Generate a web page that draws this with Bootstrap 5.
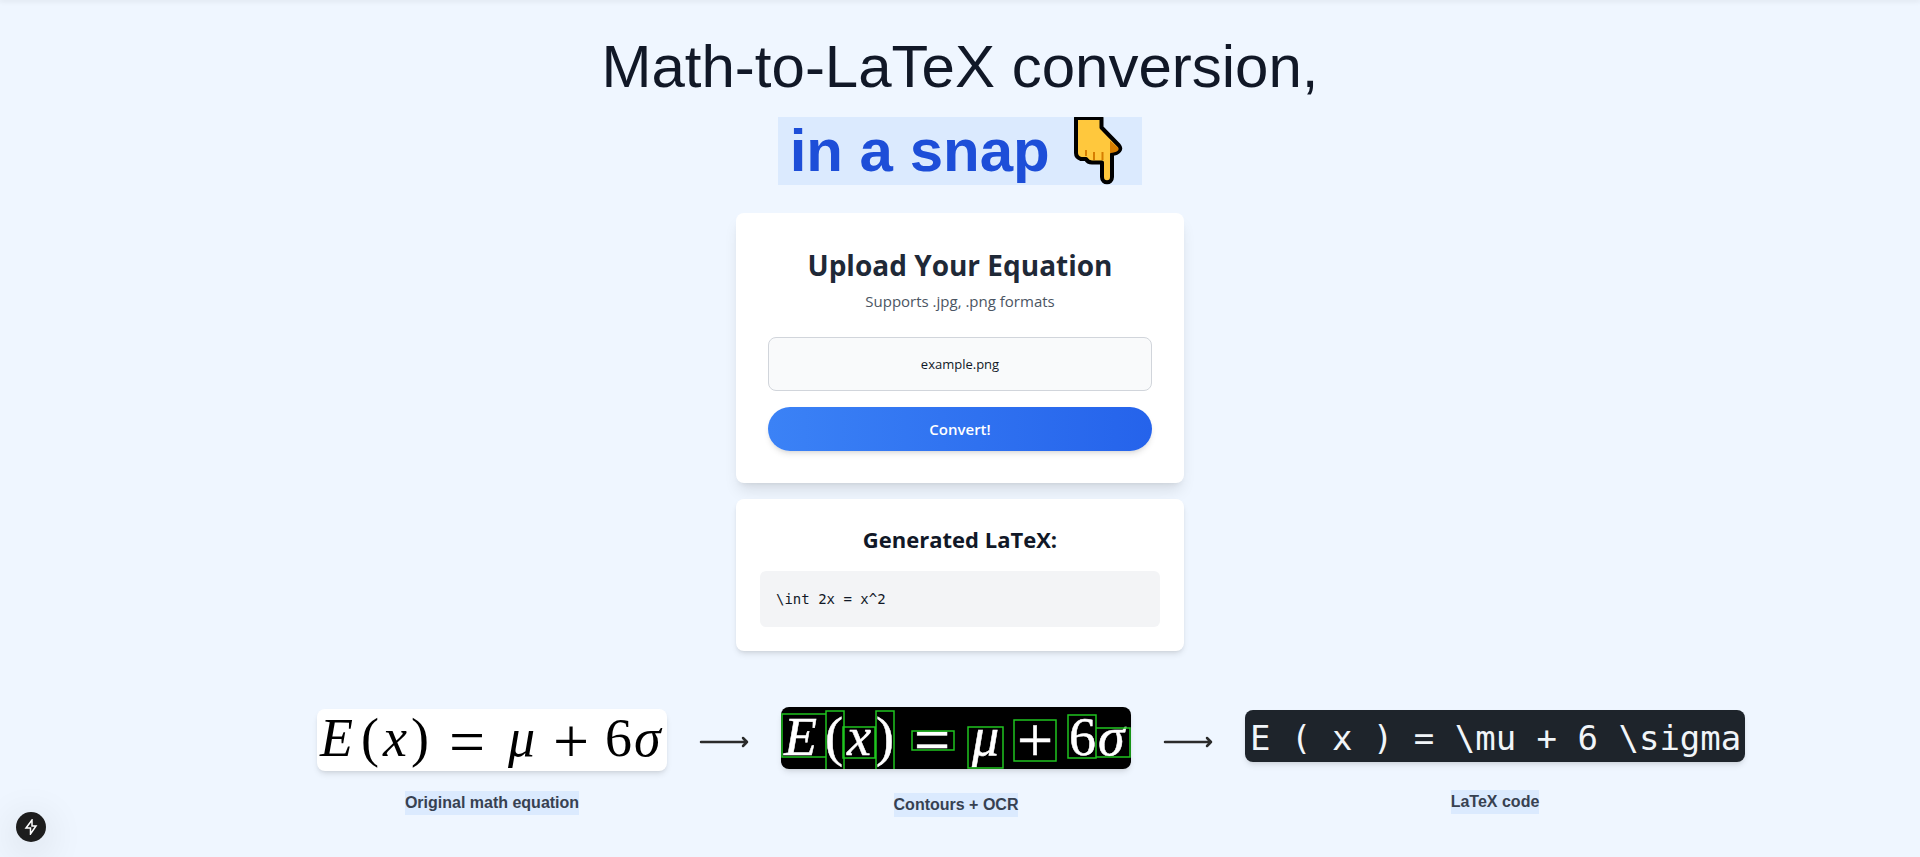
<!DOCTYPE html>
<html lang="en">
<head>
<meta charset="utf-8">
<meta name="viewport" content="width=device-width, initial-scale=1">
<title>Math-to-LaTeX conversion</title>
<link href="https://cdn.jsdelivr.net/npm/bootstrap@5.3.0/dist/css/bootstrap.min.css" rel="stylesheet">
<style>
  body { background: #eff6ff; color: #111827; font-family: "Liberation Sans", Arial, sans-serif; }
  .page-top { height: 0; box-shadow: 0 0 5px 1px rgba(0, 0, 0, .12); }
  .hero { font-size: 60px; line-height: 84px; padding-top: 25px; }
  .hero-mark { background: #dbeafe; color: #1d4ed8; padding: 0 12px; line-height: 68px; }
  .hand { width: 64px; height: 68px; }
  .tool-stack { max-width: 448px; margin-top: 20px; font-family: "Open Sans", "Noto Sans", sans-serif; }
  .panel { background: #fff; border-radius: 8px; }
  .panel-upload { padding: 32px; box-shadow: 0 10px 15px -3px rgba(0,0,0,.1), 0 4px 6px -4px rgba(0,0,0,.1); }
  .panel-result { padding: 24px; }
  .panel-result, .shot { box-shadow: 0 4px 6px -1px rgba(0,0,0,.1), 0 2px 4px -2px rgba(0,0,0,.1); }
  .upload-title { font-size: 28px; line-height: 40px; color: #1f2937; }
  .upload-hint { font-size: 15px; line-height: 24px; color: #4b5563; }
  .file-box { height: 54px; font-size: 13px; color: #111827; background: #f9fafb; border: 1px solid #d1d5db; border-radius: 8px; }
  .btn-convert { height: 44px; font-size: 15px; color: #fff; background: linear-gradient(90deg, #3b82f6, #2563eb); box-shadow: 0 4px 6px -1px rgba(0,0,0,.1), 0 2px 4px -2px rgba(0,0,0,.1); }
  .btn-convert:hover { color: #fff; }
  .result-title { font-size: 22px; line-height: 32px; }
  .result-code { font: 14px/24px "DejaVu Sans Mono", monospace; background: #f3f4f6; border-radius: 6px; padding: 16px; }
  .steps { max-width: 1286px; margin-top: 56px; gap: 32px; }
  .shot { display: block; border-radius: 8px; overflow: visible; }
  .shot-eq { width: 350px; height: 62px; }
  .shot-code { width: 500px; height: 52px; background: #1e242b; color: #f1f5f9; font: 34px/56px "DejaVu Sans Mono", monospace; padding-left: 5px; white-space: nowrap; }
  .arrow { width: 50px; height: 12px; margin-bottom: 40px; }
  .step-label { font-size: 16px; line-height: 24px; background: #dbeafe; color: #374151; }
  .gap-a { gap: 20px; } .gap-b { gap: 24px; } .gap-c { gap: 28px; }
  .eq { font-family: "Liberation Serif", serif; font-size: 54px; }
  .eq-op { font-size: 64px; }
  .dev-btn { left: 16px; bottom: 15px; width: 30px; height: 30px; background: #1d1d1d; box-shadow: 0 8px 40px rgba(0,0,0,.16); }
</style>
</head>
<body>
<div class="page-top"></div>
<main class="d-flex flex-column">
  <h1 class="hero text-center fw-normal m-0">Math-to-LaTeX conversion,<br>
    <span class="hero-mark d-inline-flex fw-bold align-items-center"><span>in a snap&nbsp;</span><svg class="hand" viewBox="1066 117 64 68" role="img" aria-label="Pointing down">
      <path d="M1076 118H1101.500V127.500L1119 145.500C1122 149 1119 153.500 1112 154V177C1112 184 1102 184 1102 177V162.500H1092C1089 162.500 1087 161 1086 159H1081C1078 158 1076 156 1076 153Z" fill="#ffc83d" stroke="#000" stroke-width="4" stroke-linejoin="round"/>
      <path d="M1110 140.500L1118 147.500C1120 150 1117 152.500 1110 153Z" fill="#d67d00"/>
      <path d="M1086 150V156M1094 152V160M1102.500 152V160" stroke="#d67d00" stroke-width="2"/>
    </svg></span></h1>

  <div class="tool-stack w-100 mx-auto d-flex flex-column gap-3">
    <form class="panel panel-upload text-center" onsubmit="return false">
      <h2 class="upload-title fw-bold mb-1">Upload Your Equation</h2>
      <p class="upload-hint mb-4">Supports .jpg, .png formats</p>
      <input class="file-box form-control text-center mb-3" type="text" value="example.png" aria-label="Equation file" readonly>
      <button class="btn btn-convert rounded-pill border-0 w-100 fw-semibold" type="submit">Convert!</button>
    </form>
    <section class="panel panel-result">
      <h3 class="result-title fw-bold text-center mb-3">Generated LaTeX:</h3>
      <pre class="result-code m-0">\int 2x = x^2</pre>
    </section>
  </div>

  <section class="steps w-100 mx-auto d-flex align-items-center">
    <div class="d-flex flex-column align-items-center gap-a">
      <svg class="shot shot-eq bg-white" viewBox="0 0 350 62" role="img" aria-label="E(x) = mu + 6 sigma">
        <g class="eq" fill="#000">
          <text x="3" y="47" font-style="italic">E</text><text x="44" y="47">(</text><text x="66" y="47" font-style="italic">x</text><text x="94" y="47">)</text>
          <text class="eq-op" x="132" y="54">=</text><text x="191" y="47" font-style="italic">μ</text><text class="eq-op" x="236" y="54">+</text><text x="288" y="47">6</text><text x="317" y="47" font-style="italic">σ</text>
        </g>
      </svg>
      <span class="step-label fw-bold">Original math equation</span>
    </div>
    <svg class="arrow flex-shrink-0" viewBox="0 0 50 12" fill="none" stroke="#2b2b2b" stroke-width="2.500" stroke-linecap="round" stroke-linejoin="round" aria-hidden="true"><path d="M2 6H48M44 2L48 6L44 10"/></svg>
    <div class="d-flex flex-column align-items-center gap-b">
      <svg class="shot shot-eq bg-black" viewBox="0 0 350 62" role="img" aria-label="E(x) = mu + 6 sigma with character contours">
        <g class="eq" fill="#fff" stroke="#fff" stroke-width=".5">
          <text x="3" y="48" font-style="italic">E</text><text x="44" y="48">(</text><text x="66" y="48" font-style="italic">x</text><text x="95" y="48">)</text>
          <text class="eq-op" x="133" y="54">=</text><text x="191" y="48" font-style="italic">μ</text><text class="eq-op" x="236" y="55">+</text><text x="288" y="48">6</text><text x="317" y="48" font-style="italic">σ</text>
        </g>
        <path d="M1 7H45V50H1ZM45 62V4H63V62M62 20H94V51H62ZM95 62V4H113V62M131 24H173V43H131ZM187 20H222V61H187ZM233 13H275V54H233ZM287 8H315V51H287ZM315 21H349V50H315Z" fill="none" stroke="#1fc41f" stroke-width="1.500"/>
      </svg>
      <span class="step-label fw-bold">Contours + OCR</span>
    </div>
    <svg class="arrow flex-shrink-0" viewBox="0 0 50 12" fill="none" stroke="#2b2b2b" stroke-width="2.500" stroke-linecap="round" stroke-linejoin="round" aria-hidden="true"><path d="M2 6H48M44 2L48 6L44 10"/></svg>
    <div class="d-flex flex-column align-items-center gap-c">
      <div class="shot shot-code">E ( x ) = \mu + 6 \sigma</div>
      <span class="step-label fw-bold">LaTeX code</span>
    </div>
  </section>
</main>
<button class="dev-btn btn position-fixed rounded-circle border-0 p-0 d-flex align-items-center justify-content-center" type="button" aria-label="Developer tools">
  <svg width="16" height="16" viewBox="0 0 16 16" fill="none" stroke="#fff" stroke-width="1.500" aria-hidden="true"><path d="M9 1L3 9H7.500V15L13 7H9Z"/></svg>
</button>
<script src="https://cdn.jsdelivr.net/npm/bootstrap@5.3.0/dist/js/bootstrap.bundle.min.js"></script>
</body>
</html>
